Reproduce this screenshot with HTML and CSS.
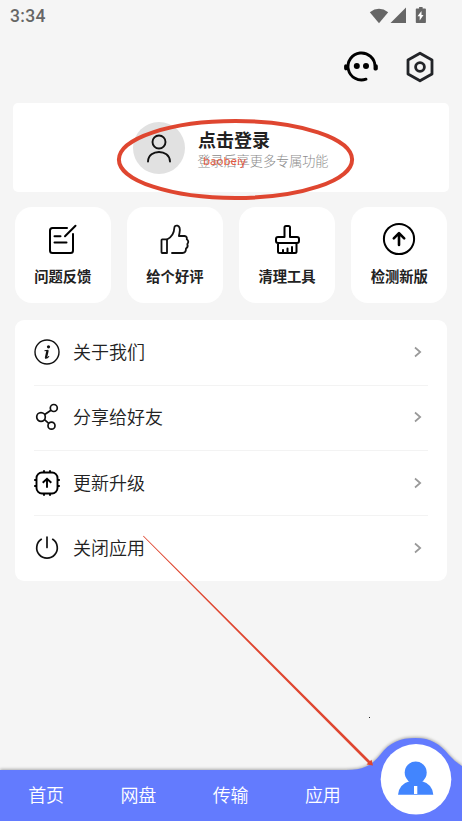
FILE: index.html
```html
<!DOCTYPE html>
<html lang="zh-CN">
<head>
<meta charset="utf-8">
<title>我的</title>
<link rel="stylesheet" href="styles.css">
</head>
<body>
<div class="screen">
  <header class="status">
    <span class="clock">3:34</span>
    <svg class="signals" width="60" height="20" viewBox="0 0 60 20" fill="#666">
      <path d="M0.8 5.2Q10 -1.7 19.2 5.2L10 16.2Z"/>
      <path d="M21.500 16H37V0.500Z"/>
      <path d="M49.500 0h3.500v1.500h2.500q.8 0 .8.800v12.900q0 .8-.8.800h-8.500q-.8 0-.8-.8V2.300q0-.8.800-.8h2.500z" transform="translate(0.600 0)"/>
      <path fill="#fff" d="M52.500 4L48.500 9.300h2.200V13.500L54.500 8h-2z"/>
    </svg>
  </header>

  <div class="tools">
    <svg width="36" height="36" viewBox="0 0 36 36" fill="none" stroke="#000" stroke-width="2.900" stroke-linecap="round">
      <path d="M23 30.200A13.500 13.500 0 1 1 32 17.500V20"/>
      <path stroke-width="3.600" d="M2.900 17v2.600M33 17v2.800"/>
      <circle cx="13.800" cy="17" r="3" fill="#000" stroke="none"/>
      <circle cx="23" cy="17" r="3" fill="#000" stroke="none"/>
    </svg>
    <svg width="32" height="36" viewBox="0 0 32 36" fill="none" stroke="#222428" stroke-width="2.800" stroke-linejoin="round">
      <path d="M16 4.200L28 11V25L16 31.800L4 25V11Z"/>
      <circle cx="16" cy="18" r="4.400"/>
    </svg>
  </div>

  <section class="login">
    <div class="avatar">
      <svg width="52" height="52" viewBox="0 0 52 52" fill="none" stroke="#111" stroke-width="1.900" stroke-linecap="round">
        <circle cx="26" cy="20" r="6.500"/>
        <path d="M15 39.500C15.500 26.800 36.500 26.800 37 39.500"/>
      </svg>
    </div>
    <div class="login-copy">
      <h1>点击登录</h1>
      <p>登录后享更多专属功能</p>
    </div>
    <span class="watermark">baobeiy</span>
  </section>

  <section class="tiles">
    <div class="tile">
      <svg width="36" height="36" viewBox="0 0 36 36" fill="none" stroke="#000" stroke-width="2" stroke-linecap="round" stroke-linejoin="round">
        <path d="M22 6H7.500Q5 6 5 8.500V28.500Q5 31 7.500 31H25.500Q28 31 28 28.500V12M20 14.200L30.500 3.800M9.500 14.200H15.500M9.500 20.500H21.500"/>
      </svg>
      <span>问题反馈</span>
    </div>
    <div class="tile">
      <svg width="36" height="36" viewBox="0 0 36 36" fill="none" stroke="#111" stroke-width="1.800" stroke-linecap="round" stroke-linejoin="round">
        <path d="M4.500 18Q4.500 17.300 5.200 17.300H10V31H5.200Q4.500 31 4.500 30.300Z"/>
        <path d="M10 17.500Q17 14 17.300 6Q17.500 3 20.500 3.700Q23.800 4.800 22.500 11L21.900 14H27.500Q30.300 14.500 29.800 17.300Q32.500 19.500 30.300 22Q31.500 25 29 26.500Q29 31 25.500 31H15"/>
      </svg>
      <span>给个好评</span>
    </div>
    <div class="tile">
      <svg width="36" height="36" viewBox="0 0 36 36" fill="none" stroke="#000" stroke-width="2" stroke-linecap="round" stroke-linejoin="round">
        <path d="M15.500 15V5.500Q15.500 4 17 4H19.500Q21 4 21 5.500V15H28Q30 15 30 17V19Q30 21 28 21H9Q7 21 7 19V17Q7 15 9 15ZM9 21V29.500Q9 31 10.500 31H26Q27.500 31 27.500 29.500V21M14 30V28M18.500 30V26.500M23 30V25"/>
      </svg>
      <span>清理工具</span>
    </div>
    <div class="tile">
      <svg width="36" height="36" viewBox="0 0 36 36" fill="none" stroke="#000" stroke-width="2" stroke-linecap="round" stroke-linejoin="round">
        <circle cx="18" cy="17" r="15.100"/>
        <path stroke-width="2.600" d="M18 23V11.500M12.800 16.300L18 11.100L23.200 16.300"/>
      </svg>
      <span>检测新版</span>
    </div>
  </section>

  <ul class="menu">
    <li>
      <svg class="icon" width="28" height="28" viewBox="0 0 28 28" fill="none" stroke="#111">
        <circle cx="14" cy="14" r="12" stroke-width="1.400"/>
        <circle cx="15.500" cy="8.800" r="1.600" fill="#111" stroke="none"/>
        <path stroke-width="1.100" d="M11.500 12.800L15.200 12.200M12 20.300Q14.500 20.500 16 18.300"/>
        <path stroke-width="2.300" d="M14.600 12.300L12.900 20"/>
      </svg>
      <span>关于我们</span>
      <svg class="chevron" width="10" height="12" viewBox="0 0 10 12"><path d="M2 1.500L7.200 6L2 10.500"/></svg>
    </li>
    <li>
      <svg class="icon" width="28" height="28" viewBox="0 0 28 28" fill="none" stroke="#111" stroke-width="1.700">
        <circle cx="8" cy="14" r="4.300"/>
        <circle cx="20.800" cy="5" r="3.500"/>
        <circle cx="18.500" cy="22.700" r="3.500"/>
        <path d="M11.700 11.500L18 7.200M11.500 16.700L15.700 20.300"/>
      </svg>
      <span>分享给好友</span>
      <svg class="chevron" width="10" height="12" viewBox="0 0 10 12"><path d="M2 1.500L7.200 6L2 10.500"/></svg>
    </li>
    <li>
      <svg class="icon" width="28" height="28" viewBox="0 0 28 28" fill="none" stroke="#000" stroke-width="1.900">
        <rect x="3.500" y="3.500" width="21" height="21" rx="5.500"/>
        <path d="M11 3.500V1.200M17 3.500V1.200M11 24.500V26.800M17 24.500V26.800M3.500 11H1.200M3.500 17H1.200M24.500 11H26.800M24.500 17H26.800M14 18.700V10M9.700 13.800L14 9.700L18.300 13.800"/>
      </svg>
      <span>更新升级</span>
      <svg class="chevron" width="10" height="12" viewBox="0 0 10 12"><path d="M2 1.500L7.200 6L2 10.500"/></svg>
    </li>
    <li>
      <svg class="icon" width="28" height="28" viewBox="0 0 28 28" fill="none" stroke="#111" stroke-width="1.700" stroke-linecap="round">
        <path d="M14 3V13.500M8.300 5.300A10.300 10.300 0 1 0 19.700 5.300"/>
      </svg>
      <span>关闭应用</span>
      <svg class="chevron" width="10" height="12" viewBox="0 0 10 12"><path d="M2 1.500L7.200 6L2 10.500"/></svg>
    </li>
  </ul>

  <nav class="tabs">
    <svg class="tabs-shape" width="462" height="91" viewBox="0 0 462 91">
      <path class="tabs-bar" d="M0 40H346C364 40 372 35 380 25C390 12 400 8 415.500 8C431 8 440 14 449 25Q455 32 462 36V91H0Z"/>
      <circle cx="416" cy="49.300" r="35.300" fill="#fff"/>
      <circle cx="415.700" cy="42.600" r="11" fill="#4285fe"/>
      <path fill="#4285fe" d="M398 64.800Q399 54 410 51H421.500Q432.500 54 433.300 64.800Z"/>
      <rect x="414" y="56" width="3.300" height="8" fill="#fff"/>
    </svg>
    <a>首页</a><a>网盘</a><a>传输</a><a>应用</a>
  </nav>

  <svg class="marks" width="462" height="821" viewBox="0 0 462 821">
    <ellipse cx="235.500" cy="159.500" rx="116.600" ry="38.500" fill="none" stroke="#df4630" stroke-width="4"/>
    <path fill="#df4630" d="M143 536.300L143.600 535.700L370 761L371.500 759.700L373 765.500L366.500 764.500L368 763Z"/>
    <rect x="369" y="717" width="1" height="1" fill="#222"/>
  </svg>
</div>
</body>
</html>
```
FILE: styles.css
```css
* { box-sizing: border-box; margin: 0; padding: 0; }

body {
  background: #f5f5f5;
  color: #222;
  font-family: "Noto Sans CJK SC", sans-serif;
}

svg { display: block; flex: none; }

.screen {
  position: relative;
  display: flex;
  flex-direction: column;
  width: 462px;
  height: 821px;
  overflow: hidden;
}

.status {
  display: flex;
  justify-content: space-between;
  height: 49px;
  padding: 7px 33px 0 10px;
}

.clock {
  font: 500 17.5px/19px Roboto, sans-serif;
  color: #666;
  letter-spacing: 0.3px;
}

.tools {
  display: flex;
  justify-content: flex-end;
  gap: 25.500px;
  height: 54px;
  padding-right: 26px;
}

.login {
  position: relative;
  display: flex;
  gap: 13px;
  width: 436px;
  height: 89px;
  margin-left: 13px;
  padding: 18.500px 0 0 120px;
  border-radius: 5px;
  background: #fff;
}

.avatar {
  width: 52px;
  height: 52px;
  border-radius: 50%;
  background: #e1e1e1;
}

.login h1 {
  margin-top: 4.500px;
  font-size: 18px;
  line-height: 26px;
  font-weight: 700;
}

.login p {
  margin-left: -0.500px;
  font-size: 13.1px;
  line-height: 17px;
  color: #8c8c8c;
  font-weight: 300;
}

.watermark {
  position: absolute;
  left: 190px;
  top: 50px;
  font: 11.5px/16px "Noto Sans", sans-serif;
  color: #e25840;
}

.tiles {
  display: flex;
  justify-content: space-between;
  margin: 15px 15px 0;
}

.tile {
  display: flex;
  flex-direction: column;
  align-items: center;
  width: 95.500px;
  height: 96px;
  padding-top: 15px;
  border-radius: 17px;
  background: #fff;
  font-size: 14.3px;
  line-height: 22px;
  font-weight: 700;
}

.tile span { margin-top: 7px; }

.menu {
  width: 432px;
  height: 261px;
  margin: 17px 0 0 15px;
  padding: 0 19px;
  border-radius: 9px;
  background: #fff;
  list-style: none;
}

.menu li {
  display: flex;
  align-items: center;
  height: 65.400px;
  padding: 0 5px 1px 0;
  font-size: 18px;
  line-height: 26px;
  font-weight: 350;
}

.menu li:first-child { height: 64.500px; }

.menu li + li { border-top: 1px solid #f3f3f3; }

.menu span { margin-top: -2px; }

.icon { margin: 0 12px 0 -1px; }

.chevron {
  margin-left: auto;
  fill: none;
  stroke: #999;
  stroke-width: 1.700;
}

.tabs {
  position: relative;
  display: flex;
  height: 52px;
  margin-top: auto;
  padding-right: 93px;
  color: #fff;
  font-size: 18px;
  line-height: 50px;
  font-weight: 350;
}

.tabs a { position: relative; flex: 1; text-align: center; }

.tabs-shape {
  position: absolute;
  left: 0;
  bottom: 0;
}

.tabs-bar {
  fill: #637bfe;
  filter: drop-shadow(0 -1px 1.5px rgba(0, 0, 0, 0.3));
}

.marks {
  position: absolute;
  left: 0;
  top: 0;
  pointer-events: none;
}
```
